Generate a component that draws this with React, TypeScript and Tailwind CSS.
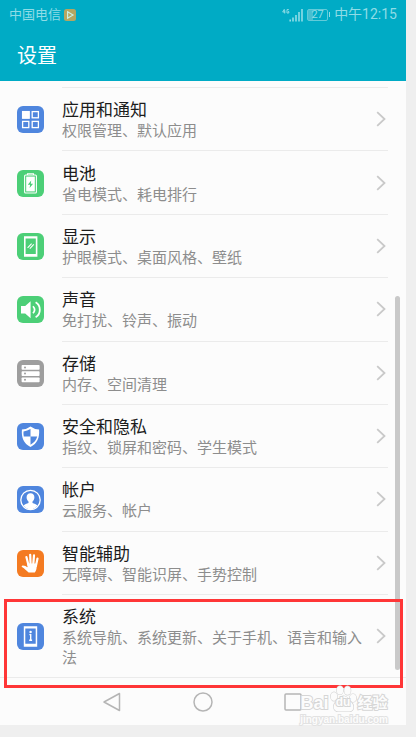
import type { ReactNode } from "react";

interface SettingItem {
  id: string;
  title: string;
  summary: string;
  color: string;
  icon: ReactNode;
}

const settings: SettingItem[] = [
  {
    id: "apps",
    title: "应用和通知",
    summary: "权限管理、默认应用",
    color: "bg-[#4f86de]",
    icon: (
      <g fill="none" stroke="#fff" strokeWidth="1.3">
        <rect x="5.6" y="5.6" width="6.6" height="6.6" fill="#fff" />
        <rect x="15.2" y="5.6" width="6.2" height="6.2" />
        <rect x="5.6" y="15.4" width="6.2" height="6.2" />
        <rect x="15.2" y="15.4" width="6.2" height="6.2" />
      </g>
    ),
  },
  {
    id: "battery",
    title: "电池",
    summary: "省电模式、耗电排行",
    color: "bg-[#4ccf77]",
    icon: (
      <>
        <path d="M10.5 5V3.8h6V5" fill="none" stroke="#fff" strokeWidth="1.1" />
        <rect x="7.6" y="5" width="11.8" height="18" rx="1" fill="none" stroke="#fff" strokeWidth="1.1" />
        <rect x="9.2" y="6.6" width="8.6" height="14.8" fill="#fff" />
        <path d="M14.2 10.5l-3.4 4.2h2.3l-.5 3.3 3.5-4.3h-2.3z" fill="#4ccf77" />
      </>
    ),
  },
  {
    id: "display",
    title: "显示",
    summary: "护眼模式、桌面风格、壁纸",
    color: "bg-[#4ccf77]",
    icon: (
      <>
        <path fillRule="evenodd" d="M7 3.2h13.4v20.6H7zM8.6 5.6v15.4h10.2V5.6z" fill="#fff" />
        <path d="M10.6 14.8l4-4.2M12.8 15.6l4-4.2" stroke="#fff" strokeWidth="1.1" />
      </>
    ),
  },
  {
    id: "sound",
    title: "声音",
    summary: "免打扰、铃声、振动",
    color: "bg-[#4ccf77]",
    icon: (
      <>
        <path d="M4 10h4.2l5.4-4.8v17L8.2 17.4H4z" fill="#fff" />
        <path d="M16 10.2q3.2 3.5 0 7" fill="none" stroke="#fff" strokeWidth="1.7" />
        <path d="M18.6 6.2c5.6 3 5.6 12 0 15" fill="none" stroke="#fff" strokeWidth="1.8" />
      </>
    ),
  },
  {
    id: "storage",
    title: "存储",
    summary: "内存、空间清理",
    color: "bg-[#9e9e9e]",
    icon: (
      <>
        <g fill="#fff">
          <rect x="4.6" y="5" width="18" height="4.8" rx=".8" />
          <rect x="4.6" y="11.2" width="18" height="4.8" rx=".8" />
          <rect x="4.6" y="17.4" width="18" height="4.8" rx=".8" />
        </g>
        <g fill="#9e9e9e">
          <circle cx="8" cy="7.4" r="1" />
          <circle cx="8" cy="13.6" r="1" />
          <circle cx="8" cy="19.8" r="1" />
        </g>
      </>
    ),
  },
  {
    id: "security",
    title: "安全和隐私",
    summary: "指纹、锁屏和密码、学生模式",
    color: "bg-[#4f86de]",
    icon: (
      <>
        <path d="M13.5 3.4q3.8 2.8 8.6 3.2c.6 8.4-1.7 14-8.6 17.4C6.6 20.6 4.3 15 4.9 6.6q4.8-.4 8.6-3.2z" fill="#fff" />
        <path d="M13.5 6v7.6H6.8c-.4-1.8-.4-3.4-.3-5.2 2.6-.4 4.9-1.200 7-2.400zM13.500 13.600h6.700c-.9 3.700-3.100 6.300-6.700 8.100z" fill="#4f86de" />
      </>
    ),
  },
  {
    id: "account",
    title: "帐户",
    summary: "云服务、帐户",
    color: "bg-[#4f86de]",
    icon: (
      <>
        <circle cx="13.5" cy="14" r="9.7" fill="none" stroke="#fff" strokeWidth="1.3" />
        <path
          d="M13.5 7.3c-2.6 0-4 1.7-3.9 4.1.1 1.8.8 3 1.9 4v1.5c-1.8.9-3.8 1.1-5 2.6 1.5 2.3 4 3.7 7 3.7s5.5-1.4 7-3.7c-1.2-1.5-3.2-1.7-5-2.6v-1.5c1.1-1 1.8-2.2 1.9-4 .1-2.4-1.3-4.1-3.9-4.1z"
          fill="#fff"
        />
      </>
    ),
  },
  {
    id: "assist",
    title: "智能辅助",
    summary: "无障碍、智能识屏、手势控制",
    color: "bg-[#f47b22]",
    icon: (
      <>
        <path
          d="M9.4 7l2 8M13.2 4.8l.4 10M17 5.4l-.8 10M20.5 8.5L18.9 16"
          stroke="#fff"
          strokeWidth="2.2"
          strokeLinecap="round"
        />
        <path
          d="M10.2 13.5H20l-.5 5c-.2 1.4-.7 2.6-1.7 3.9h-6.2c-2.3-1.4-3.9-3.6-6.6-5.3-.8-.6-.1-1.8.9-1.7 1.8.1 3.3.9 4.7 1.8z"
          fill="#fff"
        />
      </>
    ),
  },
  {
    id: "system",
    title: "系统",
    summary: "系统导航、系统更新、关于手机、语言和输入法",
    color: "bg-[#4f86de]",
    icon: (
      <>
        <path fillRule="evenodd" d="M6.8 3.2h13.4v20.6H6.8zM8.3 5.4v15.4h10.4V5.4z" fill="#fff" />
        <circle cx="13.6" cy="9" r="1.2" fill="#fff" />
        <path d="M12.4 11.6h1.3V17M12.2 17.2h2.9" fill="none" stroke="#fff" strokeWidth="1.4" />
      </>
    ),
  },
];

function StatusBar() {
  return (
    <div className="flex h-[29px] items-center justify-between px-[9px] text-[13px] text-[#8fdce6]">
      <div className="flex items-center gap-[3px]">
        <span>中国电信</span>
        <svg className="h-3 w-3" viewBox="0 0 12 12">
          <rect width="12" height="12" rx="2.5" fill="#b5a661" />
          <path d="M3.6 2.8L9 6 3.6 9.2V6z" fill="none" stroke="#c8f0e4" strokeWidth="1.2" />
        </svg>
      </div>
      <div className="flex items-center gap-1">
        <svg className="h-[14px] w-[21px]" viewBox="0 0 21 14" fill="none" stroke="#8fdce6">
          <path d="M2.5 1L.7 4h2.6M2.7 2v3.5M6.800 1.600H5v3.400h1.800V3.500H6" />
          <path d="M8.200 13.500v-2M11 13.500v-4M14 13.500V7M17 13.500V4M20 13.500V1" strokeWidth="1.6" />
        </svg>
        <div className="flex items-center gap-px">
          <span className="flex h-3 w-[21px] items-center justify-center rounded-[2px] border border-[#62cbd9] bg-linear-to-r from-[#48bfd0] from-25% to-transparent to-25% text-[11px] leading-none">
            27
          </span>
          <span className="h-[5px] w-px bg-[#8fdce6]" />
        </div>
        <span className="text-[14px]">中午12:15</span>
      </div>
    </div>
  );
}

function SettingRow({ item, last }: { item: SettingItem; last: boolean }) {
  return (
    <li className={last ? "relative h-[82px]" : "h-full"}>
      <a href={`#${item.id}`} className="flex h-full items-center pl-[17px]">
        <svg className={`size-[27px] shrink-0 rounded-md ${item.color}`} viewBox="0 0 27 27" aria-hidden="true">
          {item.icon}
        </svg>
        <div
          className={`mx-[18px] flex h-full flex-1 items-center justify-between ${
            last ? "" : "border-b border-[#ebebeb]"
          }`}
        >
          <div className="pt-[2px]">
            <h2 className="text-[17px] leading-[22px] text-[#1c1c1c]">{item.title}</h2>
            <p className="text-[15px] leading-5 text-[#8d8d8d]">{item.summary}</p>
          </div>
          <svg className="mr-[2px] h-4 w-[10px] shrink-0" viewBox="0 0 10 16" fill="none" stroke="#c9c9c9" strokeWidth="1.8">
            <path d="M1.200 1.200L8.500 8l-7.300 6.800" />
          </svg>
        </div>
      </a>
      {last && (
        <div className="pointer-events-none absolute -bottom-[11px] left-1 right-[3px] top-1 z-10 border-3 border-[#ff3637]" />
      )}
    </li>
  );
}

function NavigationBar() {
  return (
    <nav className="grid h-12 grid-cols-[22px_22px_22px] items-center justify-center gap-[68px] border-t border-[#ebebeb] text-[#b5b5b5]">
      <button type="button" aria-label="返回">
        <svg className="size-[22px]" viewBox="0 0 22 22" fill="none" stroke="currentColor" strokeWidth="1.5" strokeLinejoin="round">
          <path d="M17.5 2.5v17L2 11z" />
        </svg>
      </button>
      <button type="button" aria-label="主页">
        <svg className="size-[22px]" viewBox="0 0 22 22" fill="none" stroke="currentColor" strokeWidth="1.5">
          <circle cx="11" cy="11" r="9" />
        </svg>
      </button>
      <button type="button" aria-label="最近任务">
        <svg className="size-[22px]" viewBox="0 0 22 22" fill="none" stroke="currentColor" strokeWidth="1.5">
          <rect x="3" y="3" width="16" height="16" rx="1" />
        </svg>
      </button>
    </nav>
  );
}

function Watermark() {
  return (
    <div className="pointer-events-none absolute -bottom-[2px] right-[18px] z-20 font-['Liberation_Sans','Noto_Sans_CJK_SC',sans-serif] font-bold text-[#fcfcfc]">
      <div className="flex h-7 items-end justify-center gap-px [-webkit-text-stroke:2px_#d6d6d6] [paint-order:stroke_fill]">
        <span className="text-[18px] leading-5">Bai</span>
        <div className="relative h-7 w-[27px]">
          <svg className="h-7 w-[27px]" viewBox="0 0 27 28" fill="#fcfcfc" stroke="#d2d2d2" strokeWidth="1.2">
            <ellipse cx="4" cy="11.5" rx="3.2" ry="4.3" />
            <ellipse cx="10" cy="5.2" rx="3.2" ry="4.3" />
            <ellipse cx="17.5" cy="5.5" rx="3.2" ry="4.3" />
            <ellipse cx="23" cy="13" rx="3.2" ry="4" />
            <path d="M13.5 11c-4 0-5 4-7.5 6-3.5 3-3 9 2 9.5h11.5c5-.5 5-6.5 1.500-9.500-2.500-2-3.500-6-7.500-6z" />
          </svg>
          <span className="absolute inset-x-0 bottom-1 text-center text-[12px] leading-[14px]">du</span>
        </div>
        <span className="text-[15px] leading-5">经验</span>
      </div>
      <p className="text-center text-[10px] leading-[14px] [-webkit-text-stroke:2px_#e2e2e2] [paint-order:stroke_fill]">
        jingyan.baidu.com
      </p>
    </div>
  );
}

export default function App() {
  return (
    <div className="min-h-screen bg-[#efefef] pr-[10px] font-[Roboto,'Noto_Sans_CJK_SC',sans-serif]">
      <div className="relative bg-[#fcfcfc]">
        <header className="h-[81px] bg-[#00abc5]">
          <StatusBar />
          <h1 className="pl-[17px] pt-3 text-[20px] leading-[30px] text-white">设置</h1>
        </header>

        <main className="relative pt-[6px]">
          <div className="ml-[62px] mr-[18px] h-px bg-[#ebebeb]" />
          <ul className="grid h-[507px] auto-rows-fr">
            {settings.slice(0, -1).map((item) => (
              <SettingRow key={item.id} item={item} last={false} />
            ))}
          </ul>
          <ul>
            <SettingRow item={settings[settings.length - 1]} last />
          </ul>
          {/* Scroll thumb */}
          <div className="absolute bottom-[7px] right-[6px] top-[215px] w-[5px] rounded-full bg-[#c9c9c9]" />
        </main>

        <NavigationBar />
        <Watermark />
      </div>
    </div>
  );
}
